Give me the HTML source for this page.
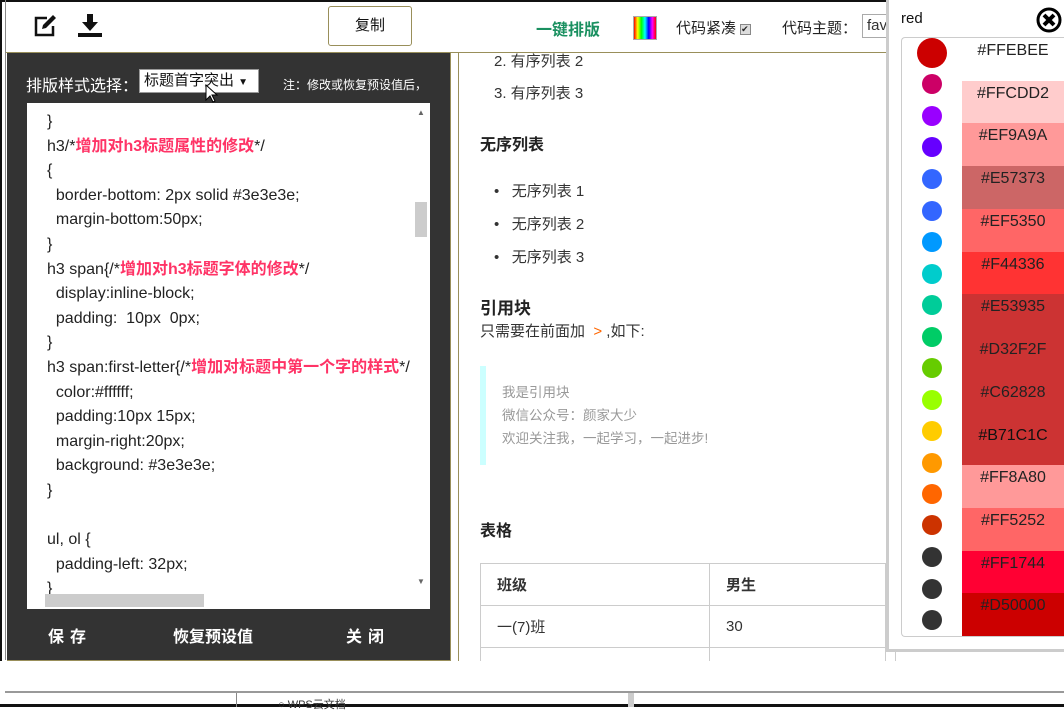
<!DOCTYPE html>
<html><head><meta charset="utf-8"><style>
*{margin:0;padding:0;box-sizing:border-box}
body{width:1064px;height:707px;overflow:hidden;background:#fff;position:relative;font-family:"Liberation Sans","Noto Sans CJK SC",sans-serif;color:#333}
.a{position:absolute}
.code div{height:24.6px;line-height:24.6px;font-size:16px;color:#222;white-space:nowrap}
.code b{color:#f36;font-weight:bold}
.sw{position:absolute;left:962px;width:102px;height:43px;font-size:16px;color:#222;text-align:center;line-height:26px}
.c{position:absolute;width:20px;height:20px;border-radius:50%;left:922px}
</style></head><body>
<div class="a" style="left:0;top:0;width:1064px;height:2px;background:#111"></div>
<div class="a" style="left:0;top:0;width:2px;height:707px;background:#111"></div>
<div class="a" style="left:5px;top:0;width:1px;height:660px;background:#888"></div>
<svg class="a" style="left:33px;top:14px" width="26" height="24" viewBox="0 0 26 24"><path d="M14 4H3v17h17v-9" fill="none" stroke="#111" stroke-width="2.5"/><path d="M9 15l1-4 10-10 3 3-10 10z" fill="#111"/></svg>
<svg class="a" style="left:78px;top:14px" width="24" height="24" viewBox="0 0 24 24"><path d="M9 0h6v8h5l-8 9-8-9h5z" fill="#111"/><rect x="0" y="19" width="24" height="4" fill="#111"/></svg>
<div class="a" style="left:328px;top:6px;width:84px;height:40px;border:1px solid #998f5a;border-radius:3px;font-size:15px;text-align:center;line-height:38px;color:#111">复制</div>
<div class="a" style="left:536px;top:16px;font-size:16px;font-weight:bold;color:#1a9060">一键排版</div>
<div class="a" style="left:633px;top:16px;width:24px;height:24px;border:1px solid #aaa;background:linear-gradient(90deg,#f00,#ff0,#0f0,#0ff,#00f,#f0f,#f00)"></div>
<div class="a" style="left:676px;top:17px;font-size:15px;color:#222">代码紧凑 <span style="display:inline-block;width:11px;height:11px;border:1px solid #888;background:#ddd;font-size:9px;line-height:9px;vertical-align:middle">✔</span></div>
<div class="a" style="left:782px;top:17px;font-size:15px;color:#222">代码主题：</div>
<div class="a" style="left:862px;top:14px;width:40px;height:24px;border:1px solid #aaa;font-size:15px;line-height:22px;padding-left:4px">fav</div>
<div class="a" style="left:6px;top:52px;width:884px;height:1px;background:#998f5a"></div>
<div class="a" style="left:7px;top:53px;width:444px;height:608px;background:#333;border-bottom:1px solid #998f5a"></div>
<div class="a" style="left:450px;top:53px;width:1px;height:608px;background:#998f5a"></div>
<div class="a" style="left:458px;top:53px;width:1px;height:608px;background:#998f5a"></div>
<div class="a" style="left:26px;top:72px;font-size:16px;color:#fff">排版样式选择：</div>
<div class="a" style="left:139px;top:69px;width:120px;height:24px;background:#fff;border:1px solid #999;font-size:15px;line-height:22px;padding-left:4px;color:#111">标题首字突出 <span style="font-size:10px">▼</span></div>
<svg class="a" style="left:205px;top:84px" width="14" height="20" viewBox="0 0 14 20"><path d="M1 1v15l4-4 3 6 2-1-3-6h5z" fill="#fff" stroke="#000"/></svg>
<div class="a" style="left:283px;top:76px;font-size:12px;color:#fff">注：修改或恢复预设值后，</div>
<div class="a" style="left:27px;top:103px;width:403px;height:506px;background:#fff;overflow:hidden">
<div class="code" style="position:absolute;left:20px;top:7px">
<div>}</div><div>h3/*<b>增加对h3标题属性的修改</b>*/</div><div>{</div>
<div>&nbsp;&nbsp;border-bottom: 2px solid #3e3e3e;</div><div>&nbsp;&nbsp;margin-bottom:50px;</div><div>}</div>
<div>h3 span{/*<b>增加对h3标题字体的修改</b>*/</div><div>&nbsp;&nbsp;display:inline-block;</div><div>&nbsp;&nbsp;padding:&nbsp; 10px&nbsp; 0px;</div><div>}</div>
<div>h3 span:first-letter{/*<b>增加对标题中第一个字的样式</b>*/</div><div>&nbsp;&nbsp;color:#ffffff;</div><div>&nbsp;&nbsp;padding:10px 15px;</div><div>&nbsp;&nbsp;margin-right:20px;</div><div>&nbsp;&nbsp;background: #3e3e3e;</div><div>}</div><div>&nbsp;</div><div>ul, ol {</div><div>&nbsp;&nbsp;padding-left: 32px;</div><div>}</div>
</div>
<div class="a" style="left:388px;top:99px;width:12px;height:35px;background:#ccc"></div>
<div class="a" style="left:18px;top:491px;width:159px;height:13px;background:#ccc"></div>
<div class="a" style="left:390px;top:5px;font-size:8px;color:#666">▲</div>
<div class="a" style="left:390px;top:474px;font-size:8px;color:#666">▼</div>
</div>
<div class="a" style="left:48px;top:623px;font-size:16px;font-weight:bold;color:#fff;letter-spacing:6px">保存</div>
<div class="a" style="left:173px;top:623px;font-size:16px;font-weight:bold;color:#fff">恢复预设值</div>
<div class="a" style="left:346px;top:623px;font-size:16px;font-weight:bold;color:#fff;letter-spacing:6px">关闭</div>
<div class="a" style="left:494px;top:50px;font-size:15px;color:#333">2. 有序列表 2</div>
<div class="a" style="left:494px;top:82px;font-size:15px;color:#333">3. 有序列表 3</div>
<div class="a" style="left:480px;top:131px;font-size:16px;font-weight:bold;color:#222">无序列表</div>
<div class="a" style="left:494px;top:180px;font-size:15px;color:#333">•&nbsp;&nbsp; 无序列表 1</div>
<div class="a" style="left:494px;top:213px;font-size:15px;color:#333">•&nbsp;&nbsp; 无序列表 2</div>
<div class="a" style="left:494px;top:246px;font-size:15px;color:#333">•&nbsp;&nbsp; 无序列表 3</div>
<div class="a" style="left:480px;top:294px;font-size:17px;font-weight:bold;color:#222">引用块</div>
<div class="a" style="left:480px;top:320px;font-size:15px;color:#333">只需要在前面加 <span style="color:#f60">&nbsp;&gt;&nbsp;</span>,如下:</div>
<div class="a" style="left:480px;top:366px;width:6px;height:99px;background:#cff"></div>
<div class="a" style="left:502px;top:381px;font-size:13.5px;color:#999;line-height:23px">我是引用块<br>微信公众号：颜家大少<br>欢迎关注我，一起学习，一起进步!</div>
<div class="a" style="left:480px;top:517px;font-size:16px;font-weight:bold;color:#222">表格</div>
<table class="a" style="left:480px;top:563px;border-collapse:collapse;font-size:15px">
<tr style="height:42px"><td style="width:229px;border:1px solid #ccc;padding-left:16px;font-weight:bold">班级</td><td style="width:176px;border:1px solid #ccc;padding-left:16px;font-weight:bold">男生</td><td style="width:10px;border:1px solid #ccc"></td></tr>
<tr style="height:42px"><td style="border:1px solid #ccc;padding-left:16px">一(7)班</td><td style="border:1px solid #ccc;padding-left:16px">30</td><td style="border:1px solid #ccc"></td></tr>
<tr style="height:20px"><td style="border:1px solid #ccc"></td><td style="border:1px solid #ccc"></td><td style="border:1px solid #ccc"></td></tr>
</table>
<div class="a" style="left:0;top:661px;width:1064px;height:32px;background:#fff"></div>
<div class="a" style="left:5px;top:691px;width:1059px;height:2px;background:#999"></div>
<div class="a" style="left:0;top:693px;width:1064px;height:14px;background:#fff"></div>
<div class="a" style="left:0;top:704px;width:1064px;height:3px;background:#111"></div>
<div class="a" style="left:236px;top:693px;width:1px;height:14px;background:#888"></div>
<div class="a" style="left:628px;top:693px;width:6px;height:14px;background:#ccc"></div>
<div class="a" style="left:278px;top:696px;font-size:11px;color:#333">○ WPS云文档</div>
<div class="a" style="left:886px;top:0;width:178px;height:652px;background:#fff;border-left:3px solid #ccc;border-bottom:3px solid #ccc"></div>
<div class="a" style="left:901px;top:10px;font-size:15px;color:#111">red</div>
<svg class="a" style="left:1036px;top:7px" width="26" height="26" viewBox="0 0 26 26"><circle cx="13" cy="13" r="11" fill="#fff" stroke="#000" stroke-width="3"/><path d="M8 8l10 10M18 8L8 18" stroke="#000" stroke-width="4"/></svg>
<div class="a" style="left:901px;top:37px;width:163px;height:600px;border:1px solid #ccc;border-right:none;border-radius:4px 0 0 4px"></div>
<div class="sw" style="top:38px;background:#fff">#FFEBEE</div>
<div class="sw" style="top:81px;background:#fcc">#FFCDD2</div>
<div class="sw" style="top:123px;background:#f99">#EF9A9A</div>
<div class="sw" style="top:166px;background:#c66">#E57373</div>
<div class="sw" style="top:209px;background:#f66">#EF5350</div>
<div class="sw" style="top:252px;background:#f33">#F44336</div>
<div class="sw" style="top:294px;background:#c33">#E53935</div>
<div class="sw" style="top:337px;background:#c33">#D32F2F</div>
<div class="sw" style="top:380px;background:#c33">#C62828</div>
<div class="sw" style="top:423px;background:#c33;color:#111">#B71C1C</div>
<div class="sw" style="top:465px;background:#f99">#FF8A80</div>
<div class="sw" style="top:508px;background:#f66">#FF5252</div>
<div class="sw" style="top:551px;background:#f03">#FF1744</div>
<div class="sw" style="top:593px;height:43px;background:#c00">#D50000</div>
<div class="c" style="left:917px;top:38px;width:30px;height:30px;background:#c00"></div>
<div class="c" style="top:74px;background:#c06"></div>
<div class="c" style="top:106px;background:#90f"></div>
<div class="c" style="top:137px;background:#60f"></div>
<div class="c" style="top:169px;background:#36f"></div>
<div class="c" style="top:201px;background:#36f"></div>
<div class="c" style="top:232px;background:#09f"></div>
<div class="c" style="top:264px;background:#0cc"></div>
<div class="c" style="top:295px;background:#0c9"></div>
<div class="c" style="top:327px;background:#0c6"></div>
<div class="c" style="top:358px;background:#6c0"></div>
<div class="c" style="top:390px;background:#9f0"></div>
<div class="c" style="top:421px;background:#fc0"></div>
<div class="c" style="top:453px;background:#f90"></div>
<div class="c" style="top:484px;background:#f60"></div>
<div class="c" style="top:515px;background:#c30"></div>
<div class="c" style="top:547px;background:#333"></div>
<div class="c" style="top:579px;background:#333"></div>
<div class="c" style="top:610px;background:#333"></div>
</body></html>
